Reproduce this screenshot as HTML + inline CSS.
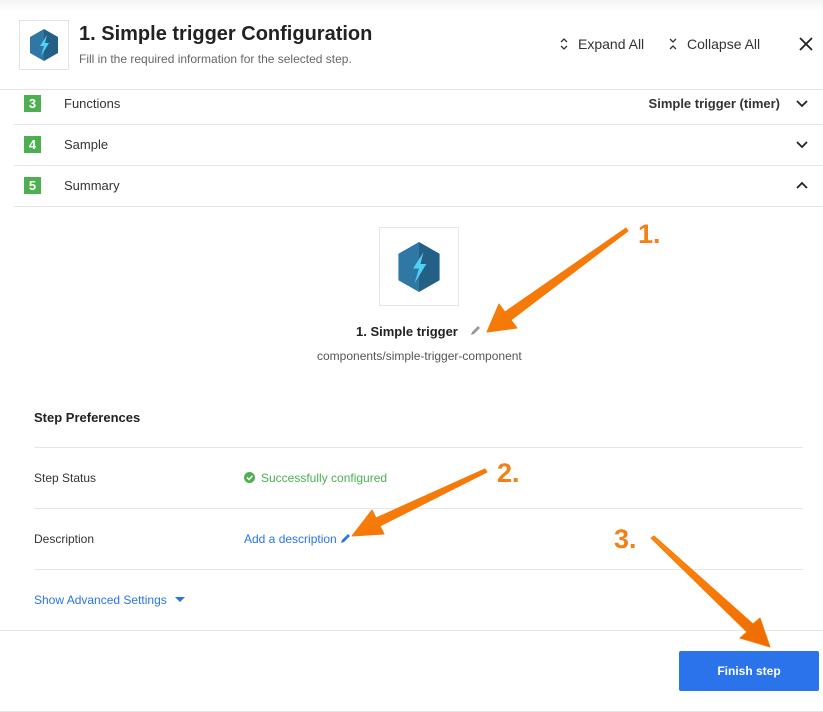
<!DOCTYPE html>
<html><head><meta charset="utf-8"><style>
*{margin:0;padding:0;box-sizing:border-box}
body{width:823px;height:712px;overflow:hidden;background:#fff;font-family:"Liberation Sans",Arial,sans-serif;position:relative;color:#222}
.a{position:absolute}
.hr{position:absolute;height:1px;background:#e6e6e6}
.badge{position:absolute;left:24px;width:17px;height:17px;background:#4caf50;color:#fff;font-weight:bold;font-size:13px;text-align:center;line-height:17px}
.rowt{position:absolute;left:64px;font-size:13px;color:#333}
.lbl{position:absolute;left:34px;font-size:12px;color:#333}
</style></head><body>
<div class="a" style="left:0;top:0;width:823px;height:89px;background:linear-gradient(#f4f4f4,#fff 12px)"></div>
<div class="a" style="left:19px;top:20px;width:50px;height:50px;border:1px solid #e3e3e3;background:#fff"></div>
<svg class="a" style="left:27px;top:27px" width="34" height="36" viewBox="0 0 34 36"><polygon points="17,2 31,10 31,26 17,34" fill="#245f86"/><polygon points="17,2 3,10 3,26 17,34" fill="#2f78a6"/><polygon points="20,8 13,19 17,19 14,29 22,16 18,16" fill="#4fd0f5"/></svg>
<div class="a" style="left:79px;top:23px;font-size:20px;font-weight:bold;color:#222">1. Simple trigger Configuration</div>
<div class="a" style="left:79px;top:52px;font-size:12px;color:#666">Fill in the required information for the selected step.</div>
<svg class="a" style="left:559px;top:37px" width="10" height="14"><path d="M2 5L5 2L8 5M2 9L5 12L8 9" stroke="#333" stroke-width="1.3" fill="none"/></svg>
<div class="a" style="left:578px;top:36px;font-size:14px;color:#333">Expand All</div>
<svg class="a" style="left:668px;top:37px" width="10" height="14"><path d="M2 2L5 5L8 2M2 12L5 9L8 12" stroke="#333" stroke-width="1.3" fill="none"/></svg>
<div class="a" style="left:687px;top:36px;font-size:14px;color:#333">Collapse All</div>
<svg class="a" style="left:799px;top:37px" width="14" height="14"><path d="M1 1L13 13M13 1L1 13" stroke="#222" stroke-width="1.8"/></svg>
<div class="hr" style="left:0;top:89px;width:823px"></div>
<div class="badge" style="top:95px">3</div><div class="rowt" style="top:96px">Functions</div>
<div class="a" style="right:43px;top:96px;font-size:13px;font-weight:bold;color:#333">Simple trigger (timer)</div>
<div class="hr" style="left:14px;top:124px;width:809px"></div>
<div class="badge" style="top:136px">4</div><div class="rowt" style="top:137px">Sample</div>
<div class="hr" style="left:14px;top:165px;width:809px"></div>
<div class="badge" style="top:177px">5</div><div class="rowt" style="top:178px">Summary</div>
<div class="hr" style="left:14px;top:206px;width:809px"></div>
<svg class="a" style="left:795px;top:98px" width="14" height="100"><path d="M2 3L7 8L12 3M2 44L7 49L12 44M2 90L7 85L12 90" stroke="#222" stroke-width="1.8" fill="none"/></svg>
<div class="a" style="left:379px;top:227px;width:80px;height:79px;border:1px solid #e6e6e6"></div>
<svg class="a" style="left:394px;top:238px" width="50" height="58" viewBox="0 0 34 36"><polygon points="17,1 31,9 31,27 17,35" fill="#245f86"/><polygon points="17,1 3,9 3,27 17,35" fill="#2f78a6"/><polygon points="20,8 13,19 17,19 14,29 22,16 18,16" fill="#4fd0f5"/></svg>
<div class="a" style="left:356px;top:324px;font-size:13px;font-weight:bold;color:#222">1. Simple trigger</div>
<svg class="a" style="left:470px;top:325px" width="11" height="11"><path d="M1 10L2 7L8 1L10 3L4 9Z" fill="#999"/></svg>
<div class="a" style="left:317px;top:349px;font-size:12px;color:#555">components/simple-trigger-component</div>
<div class="a" style="left:34px;top:410px;font-size:13px;font-weight:bold;color:#222">Step Preferences</div>
<div class="hr" style="left:34px;top:447px;width:769px"></div>
<div class="lbl" style="top:471px">Step Status</div>
<svg class="a" style="left:244px;top:472px" width="11" height="11"><circle cx="5.5" cy="5.5" r="5.5" fill="#4caf50"/><path d="M3 5.5L5 7.5L8.5 3.8" stroke="#fff" stroke-width="1.5" fill="none"/></svg>
<div class="a" style="left:261px;top:471px;font-size:12px;color:#4caf50">Successfully configured</div>
<div class="hr" style="left:34px;top:508px;width:769px"></div>
<div class="lbl" style="top:532px">Description</div>
<div class="a" style="left:244px;top:532px;font-size:12px;color:#2a73ea">Add a description</div>
<svg class="a" style="left:340px;top:533px" width="11" height="11"><path d="M1 10L2 7L8 1L10 3L4 9Z" fill="#2a73ea"/></svg>
<div class="hr" style="left:34px;top:569px;width:769px"></div>
<div class="a" style="left:34px;top:593px;font-size:12px;color:#2a73ea">Show Advanced Settings</div>
<svg class="a" style="left:175px;top:597px" width="10" height="6"><path d="M0 0L10 0L5 5Z" fill="#2a73ea"/></svg>
<div class="hr" style="left:0;top:630px;width:823px"></div>
<div class="a" style="left:679px;top:651px;width:140px;height:40px;background:#2a73ea;border-radius:2px;color:#fff;font-size:12px;font-weight:bold;text-align:center;line-height:40px">Finish step</div>
<div class="hr" style="left:0;top:711px;width:823px"></div>
<svg class="a" style="left:0;top:0" width="823" height="712">
<defs><linearGradient id="g" x1="0" y1="0" x2="1" y2="1"><stop offset="0" stop-color="#ff8a10"/><stop offset="1" stop-color="#ee6a00"/></linearGradient></defs>
<polygon points="626,228 628,231 511,320 517,328 487,332 499,304 505,312" fill="url(#g)" stroke="#f47a0a" stroke-linejoin="round"/>
<polygon points="485,469 487,472 380,526 384,534 352,536 372,510 376,518" fill="url(#g)" stroke="#f47a0a" stroke-linejoin="round"/>
<polygon points="651,538 654,536 753,624 760,618 770,647 740,638 747,632" fill="url(#g)" stroke="#f47a0a" stroke-linejoin="round"/>
<g fill="#f47f14" font-family="Liberation Sans,sans-serif" font-weight="bold" font-size="27">
<text x="638" y="243">1.</text><text x="497" y="482">2.</text><text x="614" y="548">3.</text></g>
</svg>
</body></html>
